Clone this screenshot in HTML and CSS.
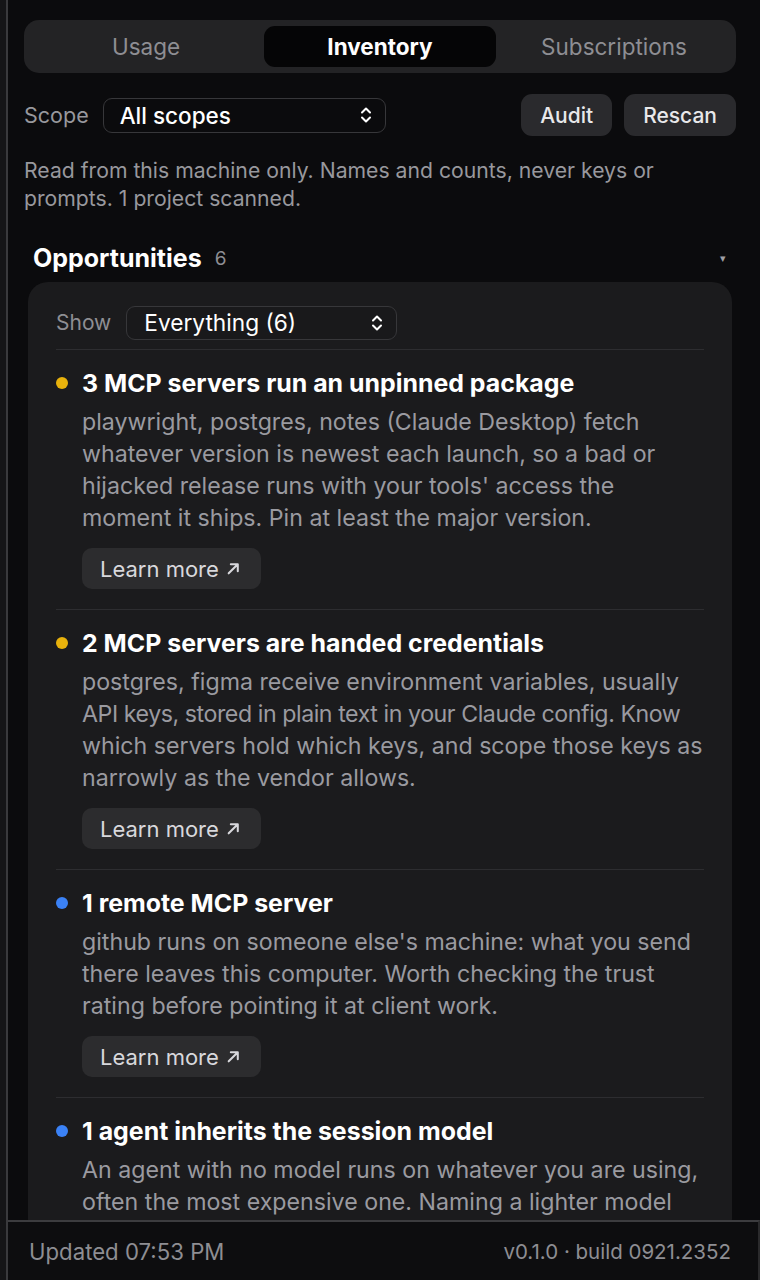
FILE: index.html
```html
<!DOCTYPE html>
<html lang="en">
<head>
<meta charset="utf-8">
<title>Inventory</title>
<link rel="stylesheet" href="styles.css">
</head>
<body>
<div class="app">
  <div class="main">
    <div class="segment">
      <div class="tab">Usage</div>
      <div class="tab active">Inventory</div>
      <div class="tab">Subscriptions</div>
    </div>

    <div class="scope-row">
      <span class="label">Scope</span>
      <div class="select scope-select">
        <span>All scopes</span>
        <svg class="chev" viewBox="0 0 14 20" width="14" height="20"><path d="M3 7.5 L7 3.5 L11 7.5 M3 12.5 L7 16.5 L11 12.5" fill="none" stroke="#fff" stroke-width="2" stroke-linecap="round" stroke-linejoin="round"/></svg>
      </div>
      <div class="spacer"></div>
      <button class="btn">Audit</button>
      <button class="btn">Rescan</button>
    </div>

    <p class="desc">Read from this machine only. Names and counts, never keys or prompts. 1 project scanned.</p>

    <section class="section">
      <div class="section-head">
        <h2>Opportunities</h2>
        <span class="count">6</span>
        <span class="caret">▾</span>
      </div>
      <div class="card">
        <div class="show-row">
          <span class="label">Show</span>
          <div class="select show-select">
            <span>Everything (6)</span>
            <svg class="chev" viewBox="0 0 14 20" width="14" height="20"><path d="M3 7.5 L7 3.5 L11 7.5 M3 12.5 L7 16.5 L11 12.5" fill="none" stroke="#fff" stroke-width="2" stroke-linecap="round" stroke-linejoin="round"/></svg>
          </div>
        </div>

        <div class="item">
          <span class="dot warn"></span>
          <div class="item-body">
            <h3>3 MCP servers run an unpinned package</h3>
            <p>playwright, postgres, notes (Claude Desktop) fetch whatever version is newest each launch, so a bad or hijacked release runs with your tools' access the moment it ships. Pin at least the major version.</p>
            <button class="learn">Learn more <svg viewBox="0 0 14 14" width="15" height="15"><path d="M2.5 11.5 L11 3 M4.5 3 H11 V9.5" fill="none" stroke="#d8d8dc" stroke-width="1.9" stroke-linecap="round" stroke-linejoin="round"/></svg></button>
          </div>
        </div>

        <div class="item">
          <span class="dot warn"></span>
          <div class="item-body">
            <h3>2 MCP servers are handed credentials</h3>
            <p>postgres, figma receive environment variables, usually <span class="tight">API keys, stored in plain text in your Claude config. Know</span> which servers hold which keys, and scope those keys as narrowly as the vendor allows.</p>
            <button class="learn">Learn more <svg viewBox="0 0 14 14" width="15" height="15"><path d="M2.5 11.5 L11 3 M4.5 3 H11 V9.5" fill="none" stroke="#d8d8dc" stroke-width="1.9" stroke-linecap="round" stroke-linejoin="round"/></svg></button>
          </div>
        </div>

        <div class="item">
          <span class="dot info"></span>
          <div class="item-body">
            <h3>1 remote MCP server</h3>
            <p>github runs on someone else's machine: what you send there leaves this computer. Worth checking the trust rating before pointing it at client work.</p>
            <button class="learn">Learn more <svg viewBox="0 0 14 14" width="15" height="15"><path d="M2.5 11.5 L11 3 M4.5 3 H11 V9.5" fill="none" stroke="#d8d8dc" stroke-width="1.9" stroke-linecap="round" stroke-linejoin="round"/></svg></button>
          </div>
        </div>

        <div class="item">
          <span class="dot info"></span>
          <div class="item-body">
            <h3>1 agent inherits the session model</h3>
            <p>An agent with no model runs on whatever you are using, often the most expensive one. Naming a lighter model</p>
          </div>
        </div>
      </div>
    </section>
  </div>

  <footer class="footer">
    <span class="updated">Updated 07:53 PM</span>
    <span class="version">v0.1.0 · build 0921.2352</span>
  </footer>
</div>
</body>
</html>
```

FILE: styles.css
```css
* { box-sizing: border-box; }

html, body {
  margin: 0;
  height: 100%;
}

body {
  background: #151517;
  font-family: Inter, "Noto Sans", sans-serif;
  color: #f2f2f4;
  overflow: hidden;
}

.app {
  margin-left: 6px;
  height: 100vh;
  border-left: 2px solid #3a3a3d;
  background: #0b0b0d;
  display: flex;
  flex-direction: column;
}

.main {
  flex: 1;
  overflow: hidden;
  padding: 20px 24px 0 16px;
}

/* segmented control */
.segment {
  display: grid;
  grid-template-columns: 1fr 1fr 1fr;
  gap: 2px;
  background: #232325;
  border-radius: 15px;
  padding: 6px;
  height: 53px;
}

.tab {
  display: flex;
  align-items: center;
  justify-content: center;
  font-size: 22.5px;
  color: #8e8e93;
  border-radius: 11px;
}

.tab.active {
  background: #050506;
  color: #ffffff;
  font-weight: 700;
}

/* scope row */
.scope-row {
  display: flex;
  align-items: center;
  margin-top: 21px;
  height: 42px;
}

.label {
  font-size: 21.5px;
  color: #98989d;
}

.select {
  display: flex;
  align-items: center;
  justify-content: space-between;
  border: 1.5px solid #37373a;
  border-radius: 9px;
  color: #ffffff;
  padding: 0 12px 0 16px;
  font-weight: 500;
}

.scope-select {
  margin-left: 14px;
  width: 283px;
  height: 35px;
  font-size: 22.5px;
}

.chev { display: block; }

.spacer { flex: 1; }

.btn {
  font-family: inherit;
  font-size: 21px;
  font-weight: 500;
  color: #e8e8ea;
  background: #2a2a2d;
  border: none;
  border-radius: 11px;
  height: 42px;
  padding: 0 19px;
  margin-left: 12px;
}

.desc {
  margin: 20px 0 0;
  font-size: 21.2px;
  line-height: 28px;
  color: #98989d;
}

/* section */
.section {
  margin: 30px 4px 0;
}

.section-head {
  display: flex;
  align-items: center;
  height: 32px;
  padding: 0 6px 0 5px;
}

.section-head h2 {
  margin: 0;
  font-size: 25px;
  font-weight: 700;
  color: #ffffff;
}

.count {
  margin-left: 13px;
  font-size: 19px;
  color: #8e8e93;
}

.caret {
  margin-left: auto;
  font-size: 11px;
  color: #a0a0a5;
}

.card {
  margin-top: 8px;
  background: #1b1b1d;
  border-radius: 20px;
  padding: 24px 28px 0;
}

.show-row {
  display: flex;
  align-items: center;
  height: 33px;
}

.show-row .label {
  font-size: 21px;
  color: #8e8e93;
}

.show-select {
  margin-left: 15px;
  width: 271px;
  height: 34px;
  padding-left: 17px;
  font-size: 22.7px;
  font-weight: 400;
  background: #19191b;
}

.show-row + .item { margin-top: 10px; }

.item {
  display: grid;
  grid-template-columns: 26px 1fr;
  border-top: 1px solid #2d2d30;
  padding: 18px 0 20px;
}

.dot {
  width: 12px;
  height: 12px;
  border-radius: 50%;
  margin-top: 9px;
}

.dot.warn { background: #e8b20c; }
.dot.info { background: #3b82f6; }

.item-body h3 {
  margin: 0;
  font-size: 24.9px;
  line-height: 30px;
  font-weight: 700;
  color: #ffffff;
}

.item-body p {
  margin: 8px 0 0;
  font-size: 23.2px;
  line-height: 32px;
  color: #9a9aa0;
}

.tight { letter-spacing: -0.45px; }

.learn {
  margin-top: 14px;
  display: inline-flex;
  align-items: center;
  gap: 7px;
  height: 41px;
  padding: 0 20px 0 18px;
  font-family: inherit;
  font-size: 22px;
  color: #d8d8dc;
  background: #2c2c2e;
  border: none;
  border-radius: 10px;
}

/* footer */
.footer {
  flex: none;
  height: 60px;
  border-top: 2px solid #3c3c3f;
  border-right: 2px solid #2a2a2c;
  background: #0d0d0f;
  display: flex;
  align-items: center;
  justify-content: space-between;
  padding: 0 27px 0 21px;
  color: #8e8e93;
}

.updated { font-size: 22.2px; }
.version { font-size: 20.5px; }
```
